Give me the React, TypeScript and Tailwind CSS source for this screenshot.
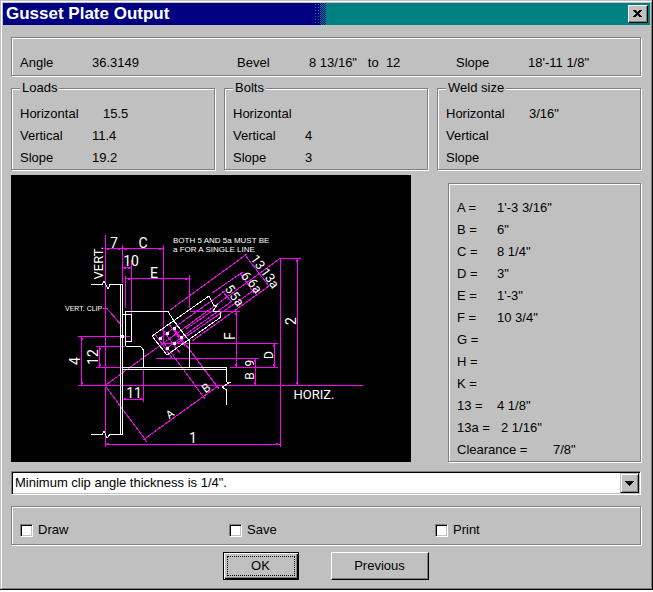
import React from "react";

const ETCHED =
  "border border-[#808080] shadow-[inset_1px_1px_0_#ffffff,1px_1px_0_#ffffff]";

type Entry = { label: string; value?: string; wide?: boolean };

const groups: { title: string; rows: Entry[] }[] = [
  {
    title: "Loads",
    rows: [
      { label: "Horizontal", value: "15.5", wide: true },
      { label: "Vertical", value: "11.4" },
      { label: "Slope", value: "19.2" },
    ],
  },
  {
    title: "Bolts",
    rows: [
      { label: "Horizontal" },
      { label: "Vertical", value: "4" },
      { label: "Slope", value: "3" },
    ],
  },
  {
    title: "Weld size",
    rows: [
      { label: "Horizontal", value: '3/16"', wide: true },
      { label: "Vertical" },
      { label: "Slope" },
    ],
  },
];

const dimensions: { label: string; value?: string; col: string }[] = [
  { label: "A =", value: "1'-3 3/16\"", col: "w-10" },
  { label: "B =", value: '6"', col: "w-10" },
  { label: "C =", value: '8 1/4"', col: "w-10" },
  { label: "D =", value: '3"', col: "w-10" },
  { label: "E =", value: "1'-3\"", col: "w-10" },
  { label: "F =", value: '10 3/4"', col: "w-10" },
  { label: "G =", col: "w-10" },
  { label: "H =", col: "w-10" },
  { label: "K =", col: "w-10" },
  { label: "13 =", value: '4 1/8"', col: "w-10" },
  { label: "13a =", value: '2 1/16"', col: "w-11" },
  { label: "Clearance =", value: '7/8"', col: "w-24" },
];

function Group({ title, rows }: { title: string; rows: Entry[] }) {
  return (
    <fieldset className={`min-w-0 flex-1 px-2 ${ETCHED}`}>
      <legend className="bg-[#c0c0c0] px-0.5 leading-[22px]">{title}</legend>
      <dl className="pt-1">
        {rows.map((r) => (
          <div key={r.label} className="flex h-[22px]">
            <dt className={r.wide ? "w-[83px]" : "w-[72px]"}>{r.label}</dt>
            <dd>{r.value}</dd>
          </div>
        ))}
      </dl>
    </fieldset>
  );
}

function Summary({ label, value, width }: { label: string; value: string; width: string }) {
  return (
    <div className={`flex ${width}`}>
      <dt className="w-[72px]">{label}</dt>
      <dd className="whitespace-pre">{value}</dd>
    </div>
  );
}

function Check({ label, width }: { label: string; width: string }) {
  return (
    <label className={`flex items-center gap-[5px] ${width}`}>
      <input
        type="checkbox"
        className="size-[13px] appearance-none border border-t-[#808080] border-l-[#808080] border-r-white border-b-white bg-white shadow-[inset_1px_1px_0_#000000,inset_-1px_-1px_0_#c0c0c0] checked:bg-[#000080]"
      />
      {label}
    </label>
  );
}

function Letter({ x, y, size = 14, turn = 0, children }: { x: number; y: number; size?: number; turn?: number; children: string }) {
  return (
    <text
      x={x}
      y={y}
      dy="0.35em"
      fontSize={size}
      textAnchor="middle"
      transform={`rotate(${turn} ${x} ${y})`}
    >
      {children}
    </text>
  );
}

const bolts = [
  [160, 338], [167, 333], [174, 328],
  [167, 348], [174, 343], [181, 337],
];

const ticks = [
  [108, 249], [119, 249], [126, 249], [160, 249], [125, 268], [129, 268],
  [129, 279], [186, 279], [82, 339], [82, 383], [100, 349], [100, 365],
  [125, 399], [141, 399], [108, 444], [277, 444], [297, 261], [297, 383],
  [236, 314], [236, 365], [274, 346], [274, 365], [255, 361], [255, 383],
];

function GussetDrawing() {
  return (
    <svg
      viewBox="11 175 400 287"
      className="h-auto w-[400px] shrink-0 bg-black font-['Roboto','Liberation_Sans',sans-serif] font-normal"
      role="img"
      aria-label="Gusset plate diagram"
    >
      <g fill="none" stroke="#ff00ff" shapeRendering="crispEdges">
        <path d="M105.5 235V447M122.5 245V283M163.5 245V344M105 248.5H164M122 267.5H132M131.5 260V314M125.5 276V308M189.5 275V308M125 278.5H190" />
        <path d="M78 336.5H130M81.5 336V386M96 346.5H125M96 367.5H122M99.5 346V368M78 385.5H363M122 399.5H144M143.5 370V402M105 444.5H281" />
        <path d="M280.5 258V447M280 258.5H301M297.5 258V386M190 311.5H240M236.5 311V368M163 343.5H278M230 367.5H278M274.5 343V368M156 358.5H259M255.5 358V386" />
        <path d="M103 308.5H107L122 326M105 385.5L280 258.5M105 385.5L147 442M143 440L218 386M164 343L205 399M174 329L219 389" />
        <path d="M170 310L247 254M245 255L269 286M212 293L243 272M240 273L254 293M222 291L232 302" />
        <path d="M160 338L225 291M167 348L232 301M174 345L256 289M192 341L269 286M186 329L215 309" />
        <path d="M155 334L172 358M162 329L180 353M169 324L185 346" />
      </g>
      <g fill="#ff00ff" shapeRendering="crispEdges">
        {ticks.map(([x, y]) => (
          <rect key={`${x}-${y}`} x={x - 1} y={y - 1} width="2" height="2" />
        ))}
      </g>
      <g fill="none" stroke="#ffffff" shapeRendering="crispEdges">
        <path d="M91 284.5H102L104 281L108 289L110 284.5H123M120.5 284V434M122.5 284V434M91 434.5H102L104 431L107 438L110 434.5H123" />
        <path d="M125.5 346V311.5H168L174 321L186 337L189.5 341V367M123 314.5H131.5V341.5H125M125.5 346.5H139Q143.5 347 143.5 352V367" />
        <path d="M123 367.5H226.5V382L230 382.500L222 387L226.500 390V405M123 369.5H226" />
        <path d="M209 296L152 336L167 355L221 317M209 296L214 306L217 305L213 311L220 312L221 317" />
      </g>
      <g fill="#ffffff" shapeRendering="crispEdges">
        {bolts.map(([x, y]) => (
          <rect key={`${x}-${y}`} x={x - 1} y={y - 1} width="3" height="3" />
        ))}
        <rect x="121" y="335" width="3" height="3" />
      </g>
      <g fill="#ffffff">
        <Letter x={114} y={243}>7</Letter>
        <Letter x={143} y={243}>C</Letter>
        <Letter x={131} y={261}>10</Letter>
        <Letter x={154} y={273}>E</Letter>
        <Letter x={98} y={263} size={13} turn={-90}>VERT.</Letter>
        <Letter x={75} y={361} turn={-90}>4</Letter>
        <Letter x={93} y={357} turn={-90}>12</Letter>
        <Letter x={134} y={393}>11</Letter>
        <Letter x={193} y={438}>1</Letter>
        <Letter x={170} y={414} size={11} turn={-36}>A</Letter>
        <Letter x={206} y={388} size={12} turn={-36}>B</Letter>
        <Letter x={291} y={321} turn={-90}>2</Letter>
        <Letter x={230} y={336} turn={-90}>F</Letter>
        <Letter x={269} y={355} size={12} turn={-90}>D</Letter>
        <Letter x={250} y={363} size={12} turn={-90}>9</Letter>
        <Letter x={250} y={376} size={12} turn={-90}>B</Letter>
        <Letter x={258} y={262} size={13} turn={54}>13</Letter>
        <Letter x={270} y={278} size={13} turn={54}>13a</Letter>
        <Letter x={246} y={276} size={13} turn={54}>6</Letter>
        <Letter x={255} y={286} size={13} turn={54}>6a</Letter>
        <Letter x={230} y={289} size={13} turn={54}>5</Letter>
        <Letter x={237} y={299} size={13} turn={54}>5a</Letter>
        <Letter x={314} y={394} size={13}>HORIZ.</Letter>
      </g>
      <g fill="#ffffff" className="font-['Liberation_Sans',Arial,sans-serif]">
        <text x="173" y="243" fontSize="8">BOTH 5 AND 5a MUST BE</text>
        <text x="173" y="252" fontSize="8">a FOR A SINGLE LINE</text>
        <text x="65" y="311" fontSize="7">VERT. CLIP</text>
      </g>
    </svg>
  );
}

export default function App() {
  return (
    <main className="border-r border-b border-black bg-[#c0c0c0] font-['Liberation_Sans',Arial,sans-serif] text-[13px] leading-[22px] text-black">
      <div className="border-t border-l border-[#c0c0c0]">
        <div className="border border-t-white border-r-[#808080] border-b-[#808080] border-l-white p-px pb-2">
          <header className="flex h-[22px] items-center bg-[#008080]">
            <div className="flex h-full w-[48%] items-center bg-[#000080] pl-[3px]">
              <h1 className="text-[17px] font-bold whitespace-nowrap text-white">Gusset Plate Output</h1>
            </div>
            <div className="h-full w-1.5 bg-[#000080] bg-[radial-gradient(#008080_1px,transparent_1px)] bg-size-[3px_3px]" />
            <div className="h-full w-1.5 bg-[repeating-conic-gradient(#000080_0_25%,#008080_0_50%)] bg-size-[2px_2px]" />
            <button
              type="button"
              aria-label="Close"
              className="mr-0.5 ml-auto flex h-[18px] w-5 items-center justify-center border border-t-white border-r-black border-b-black border-l-white bg-[#c0c0c0] shadow-[inset_-1px_-1px_0_#808080]"
            >
              <svg viewBox="0 0 10 8" className="h-2 w-2.5" shapeRendering="crispEdges">
                <path d="M0 0h3v1H0zM6 0h3v1H6zM1 1h3v1H1zM5 1h3v1H5zM2 2h5v1H2zM3 3h3v1H3zM2 4h5v1H2zM1 5h3v1H1zM5 5h3v1H5zM0 6h3v1H0zM6 6h3v1H6z" />
              </svg>
            </button>
          </header>

          <div className="flex flex-col pt-3 pr-[9px] pl-2">
            <dl className={`flex px-2 pt-3.5 pb-px ${ETCHED}`}>
              <Summary label="Angle" value="36.3149" width="w-[217px]" />
              <Summary label="Bevel" value={'8 13/16"   to  12'} width="w-[219px]" />
              <Summary label="Slope" value={"18'-11 1/8\""} width="flex-1" />
            </dl>

            <div className="mt-px flex gap-[9px]">
              {groups.map((g) => (
                <Group key={g.title} {...g} />
              ))}
            </div>

            <div className="mt-[5px] flex justify-between gap-4">
              <GussetDrawing />
              <dl className={`mt-2 w-[193px] px-2 pt-[13px] ${ETCHED}`}>
                {dimensions.map((d) => (
                  <div key={d.label} className="flex h-[22px] whitespace-nowrap">
                    <dt className={d.col}>{d.label}</dt>
                    <dd>{d.value}</dd>
                  </div>
                ))}
              </dl>
            </div>

            <div className="relative mt-[9px]">
              <select
                aria-label="Messages"
                className="block h-6 w-full appearance-none border border-t-[#808080] border-r-white border-b-white border-l-[#808080] bg-white pl-[3px] shadow-[inset_1px_1px_0_#000000,inset_-1px_-1px_0_#c0c0c0]"
              >
                <option>Minimum clip angle thickness is 1/4".</option>
              </select>
              <span className="pointer-events-none absolute top-0.5 right-0.5 flex h-5 w-[19px] items-center justify-center border border-t-[#c0c0c0] border-r-black border-b-black border-l-[#c0c0c0] bg-[#c0c0c0] shadow-[inset_1px_1px_0_#ffffff,inset_-1px_-1px_0_#808080]">
                <svg viewBox="0 0 9 5" className="h-[5px] w-[9px]" shapeRendering="crispEdges">
                  <path d="M0 0h9v1H8v1H7v1H6v1H5v1H4V4H3V3H2V2H1V1H0z" />
                </svg>
              </span>
            </div>

            <div className={`mt-[11px] flex px-2 pt-3 pb-[3px] ${ETCHED}`}>
              <Check label="Draw" width="w-[209px]" />
              <Check label="Save" width="w-[206px]" />
              <Check label="Print" width="flex-1" />
            </div>
          </div>

          <div className="mt-[7px] flex justify-center gap-8 pr-0.5">
            <button
              type="button"
              className="h-7 w-[76px] border border-black bg-[#c0c0c0] p-[3px] shadow-[inset_1px_1px_0_#ffffff,inset_-1px_-1px_0_#000000,inset_-2px_-2px_0_#808080]"
            >
              <span className="flex h-full items-center justify-center border border-dotted border-black">OK</span>
            </button>
            <button
              type="button"
              className="h-7 w-[98px] border border-t-white border-r-black border-b-black border-l-white bg-[#c0c0c0] shadow-[inset_-1px_-1px_0_#808080]"
            >
              Previous
            </button>
          </div>
        </div>
      </div>
    </main>
  );
}
